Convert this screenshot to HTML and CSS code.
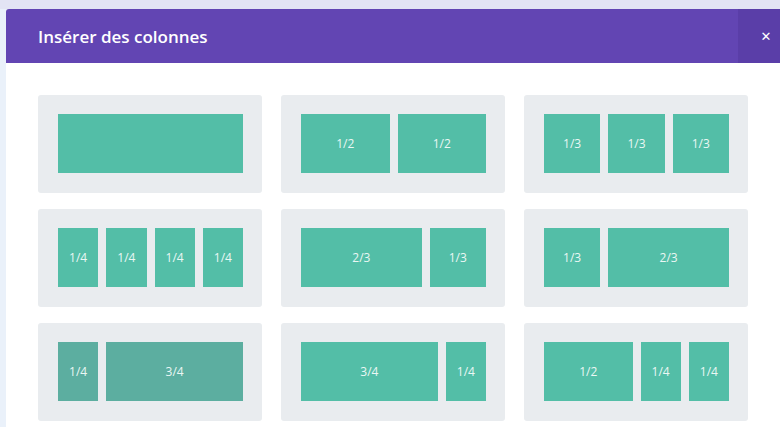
FILE: index.html
```html
<!DOCTYPE html>
<html lang="fr">
<head>
    <meta charset="UTF-8">
    <meta name="viewport" content="width=device-width, initial-scale=1.0">
    <title>Insérer des colonnes</title>
    <link rel="stylesheet" href="styles.css">
</head>
<body>
    <div class="modal">
        <div class="modal-header">
            <h2>Insérer des colonnes</h2>
            <button class="close-btn">&#x2715;</button>
        </div>
        <div class="layouts">
            <div class="layout">
                <div class="col span-12"></div>
            </div>
            <div class="layout">
                <div class="col span-6">1/2</div>
                <div class="col span-6">1/2</div>
            </div>
            <div class="layout">
                <div class="col span-4">1/3</div>
                <div class="col span-4">1/3</div>
                <div class="col span-4">1/3</div>
            </div>

            <div class="layout">
                <div class="col span-3">1/4</div>
                <div class="col span-3">1/4</div>
                <div class="col span-3">1/4</div>
                <div class="col span-3">1/4</div>
            </div>
            <div class="layout">
                <div class="col span-8">2/3</div>
                <div class="col span-4">1/3</div>
            </div>
            <div class="layout">
                <div class="col span-4">1/3</div>
                <div class="col span-8">2/3</div>
            </div>

            <div class="layout hover">
                <div class="col span-3">1/4</div>
                <div class="col span-9">3/4</div>
            </div>
            <div class="layout">
                <div class="col span-9">3/4</div>
                <div class="col span-3">1/4</div>
            </div>
            <div class="layout">
                <div class="col span-6">1/2</div>
                <div class="col span-3">1/4</div>
                <div class="col span-3">1/4</div>
            </div>
        </div>
    </div>
</body>
</html>
```

FILE: styles.css
```css
body {
    margin: 0;
    padding: 9px 0 0 6px;
    height: 418px;
    overflow: hidden;
    font-family: "Open Sans", sans-serif;
    background: linear-gradient(to bottom, #e3e4f4 0, #e3e4f4 9px, #eaf1fa 9px);
}

.modal {
    width: 788px;
    height: 418px;
    background: #fff;
    border-radius: 3px 0 0 0;
    overflow: hidden;
}

.modal-header {
    display: flex;
    align-items: center;
    height: 54px;
    background: #6245b3;
}

.modal-header h2 {
    flex: 1;
    margin: 0;
    padding-left: 32px;
    color: #fff;
    font-size: 17px;
    font-weight: 600;
}

.close-btn {
    width: 56px;
    height: 54px;
    border: 0;
    padding: 0;
    background: #5a3ea8;
    color: #fff;
    font-size: 13px;
    font-weight: bold;
    font-family: "DejaVu Sans", sans-serif;
}

.layouts {
    display: grid;
    grid-template-columns: repeat(3, 224px);
    grid-auto-rows: 98px;
    column-gap: 19px;
    row-gap: 16px;
    padding: 32px 0 0 32px;
}

.layout {
    display: grid;
    grid-template-columns: repeat(12, 1fr);
    column-gap: 8px;
    padding: 19px 19px 19px 20px;
    background: #e9ecef;
    border-radius: 3px;
}

.col {
    display: flex;
    align-items: center;
    justify-content: center;
    height: 59px;
    background: #53bea7;
    color: #eaf7f4;
    font-size: 12px;
}

.layout.hover .col {
    background: #5caea0;
}

.span-3 { grid-column: span 3; }
.span-4 { grid-column: span 4; }
.span-6 { grid-column: span 6; }
.span-8 { grid-column: span 8; }
.span-9 { grid-column: span 9; }
.span-12 { grid-column: span 12; }
```
